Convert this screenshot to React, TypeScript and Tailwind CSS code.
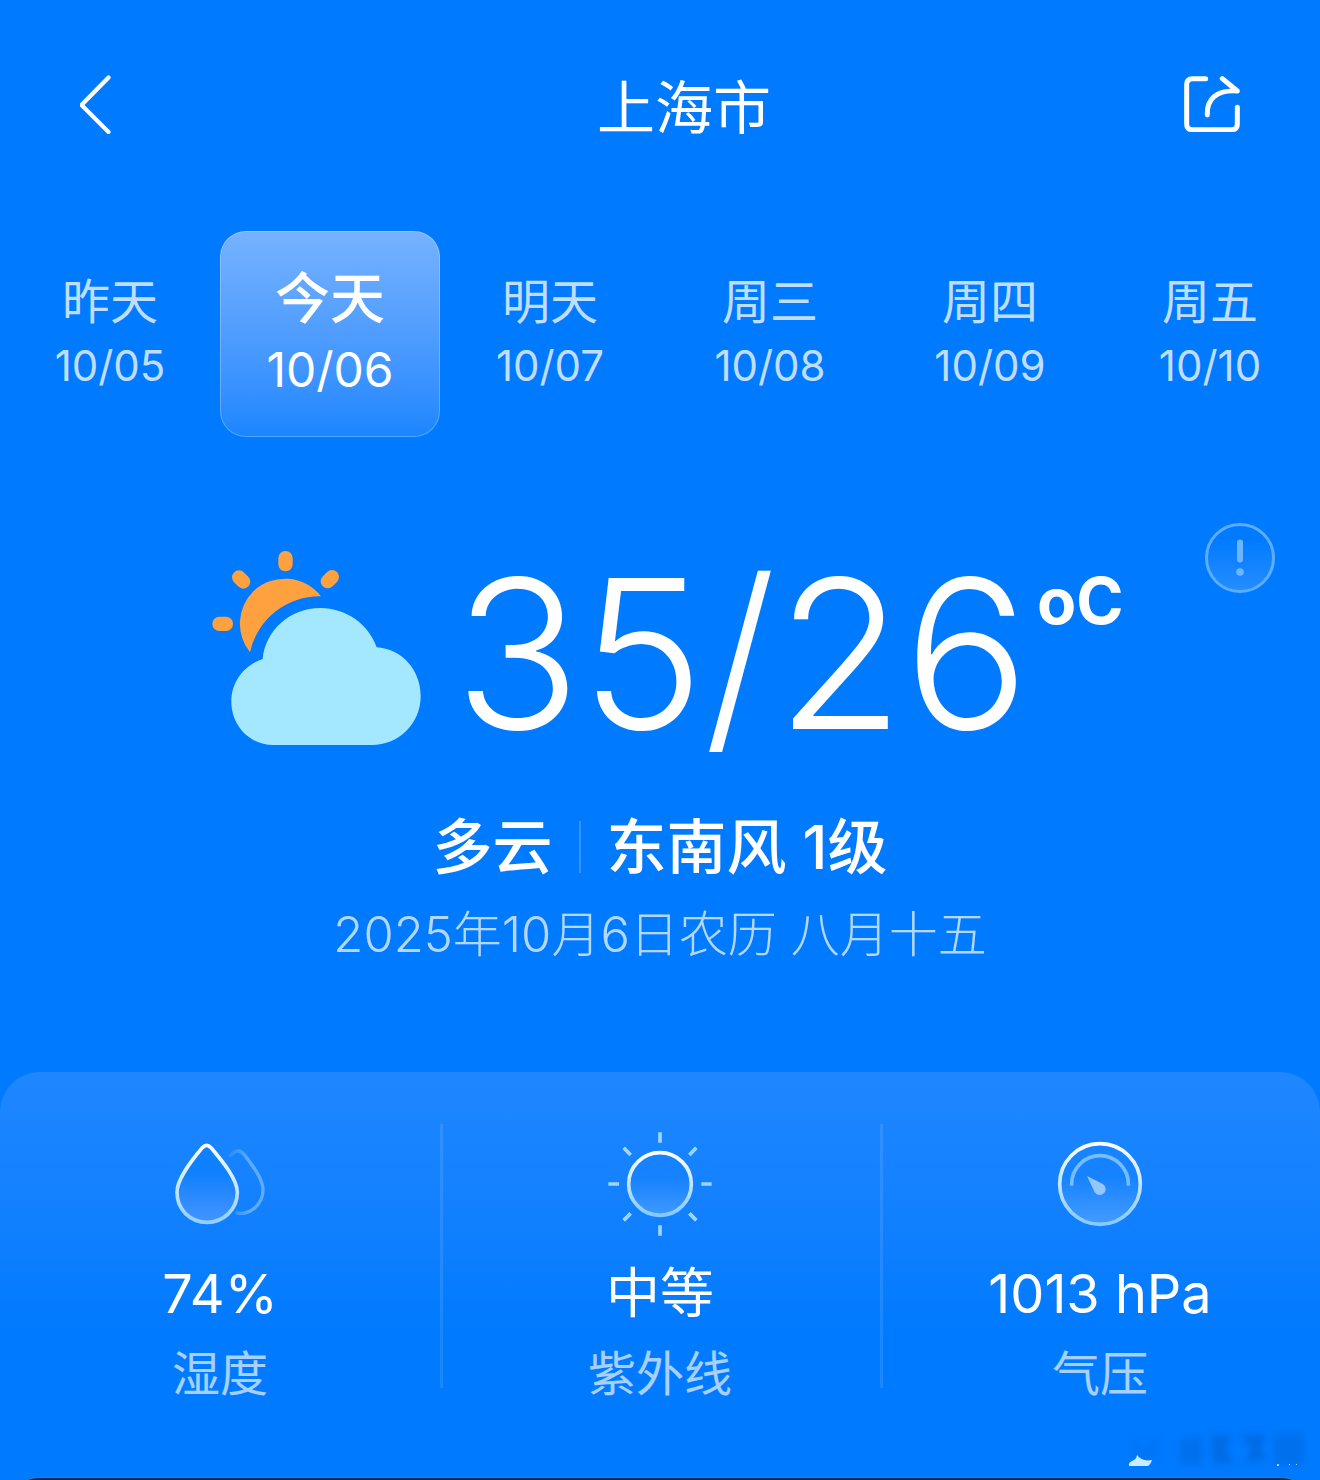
import type { ReactNode } from "react";
import { clsx } from "clsx";

interface Day {
  label: string;
  date: string;
  active?: boolean;
}

interface Metric {
  label: string;
  value: string;
  icon: ReactNode;
}

const days: Day[] = [
  { label: "昨天", date: "10/05" },
  { label: "今天", date: "10/06", active: true },
  { label: "明天", date: "10/07" },
  { label: "周三", date: "10/08" },
  { label: "周四", date: "10/09" },
  { label: "周五", date: "10/10" },
];

const metrics: Metric[] = [
  { label: "湿度", value: "74%", icon: <HumidityIcon /> },
  { label: "紫外线", value: "中等", icon: <UvIcon /> },
  { label: "气压", value: "1013 hPa", icon: <PressureIcon /> },
];

export default function App() {
  return (
    <div
      lang="zh-CN"
      className="flex min-h-screen flex-col bg-[#007aff] font-['Inter','Noto_Sans_CJK_SC',sans-serif] text-white"
    >
      {/* Header */}
      <header className="flex items-center justify-between px-20 pt-15">
        <button type="button" aria-label="返回" className="h-20 w-26">
          <BackIcon />
        </button>
        <h1 className="pt-2 text-[58px] leading-20">上海市</h1>
        <button type="button" aria-label="分享" className="flex h-20 items-center">
          <ShareIcon />
        </button>
      </header>

      {/* Day tabs */}
      <nav className="mt-[83px] grid grid-cols-6">
        {days.map((day) => (
          <DayTab key={day.date} {...day} />
        ))}
      </nav>

      {/* Current weather */}
      <main className="flex flex-col items-center pt-[86px]">
        <div className="grid w-full grid-cols-[1fr_auto_1fr] items-start">
          <div className="col-start-2 flex items-start pt-[26px] pl-4">
            <PartlyCloudyIcon />
            <p className="ml-8 flex items-start">
              <span className="text-[208px] leading-[208px] font-light">35/26</span>
              <span className="mt-4 ml-2 text-[64px] leading-[72px] font-bold">oC</span>
            </p>
          </div>
          <button type="button" aria-label="天气提示" className="mr-[45px] justify-self-end">
            <AlertIcon />
          </button>
        </div>
        <div className="mt-[50px] flex items-center text-[60px] leading-20">
          <span className="font-medium">多云</span>
          <span aria-hidden className="mx-[26px] h-13 w-0.5 bg-white/20" />
          <span className="font-medium">东南风 1级</span>
        </div>
        <p className="mt-4 text-[49px] leading-16 font-light text-white/70">
          2025年10月6日农历 八月十五
        </p>
      </main>

      {/* Metrics panel */}
      <section className="relative mt-[105px] flex-1 rounded-t-[40px] bg-linear-to-b from-[#1f87ff] to-[#007aff] to-65% pt-13">
        <dl className="grid grid-cols-3">
          {metrics.map((metric) => (
            <div
              key={metric.label}
              className="flex h-66 flex-col items-center border-l-3 border-white/10 pr-[3px] first:border-l-0 first:pr-0"
            >
              <div className="mt-1 h-28">{metric.icon}</div>
              <dt className="order-last mt-4 text-[48px] leading-16 text-white/65">
                {metric.label}
              </dt>
              <dd className="mt-[22px] text-[54px] leading-16">{metric.value}</dd>
            </div>
          ))}
        </dl>
        <CornerMark />
      </section>

      {/* Top edge of the next card */}
      <div aria-hidden className="h-[3px] overflow-hidden">
        <div className="h-20 rounded-t-[40px] border-t border-[#3b78b8] bg-[#0c2d57]" />
      </div>
    </div>
  );
}

function DayTab({ label, date, active }: Day) {
  return (
    <button
      type="button"
      aria-current={active ? "date" : undefined}
      className={clsx(
        "flex h-[206px] flex-col items-center rounded-[26px] border",
        active
          ? "border-white/25 bg-linear-to-b from-[#76b2ff] to-[#1a86ff] bg-origin-border pt-[30px]"
          : "border-transparent pt-[38px] text-white/75",
      )}
    >
      <span className={active ? "text-[55px] leading-18 font-medium" : "text-[48px] leading-16"}>
        {label}
      </span>
      <span className={active ? "text-[48px] leading-18" : "text-[42px] leading-16"}>{date}</span>
    </button>
  );
}

/* ─────────────────────────── Icons ─────────────────────────── */

function BackIcon() {
  return (
    <svg width="32" height="60" viewBox="0 0 32 60" fill="none" aria-hidden>
      <path
        d="M28.500 3.500 1.500 31 28.500 58"
        stroke="white"
        strokeWidth="4.200"
        strokeLinecap="round"
        strokeLinejoin="round"
      />
    </svg>
  );
}

function ShareIcon() {
  return (
    <svg width="56" height="56" viewBox="192 80 168 168" fill="none" aria-hidden>
      <g stroke="white" strokeWidth="15" strokeLinecap="round" strokeLinejoin="round">
        <path d="M257 88H217Q200 88 200 106V223Q200 241 217 241H335Q352 241 352 223V174" />
        <path d="M262 197C260 150 288 121 352 125L307 88" />
      </g>
    </svg>
  );
}

function PartlyCloudyIcon() {
  return (
    <svg width="210" height="198" viewBox="66 60 630 594" fill="none" aria-hidden>
      <g fill="#ffa13f">
        <path d="M180 370A137 137 0 0 1 190 187A137 137 0 0 1 393 202A213 213 0 0 0 180 370Z" />
        <rect x="265" y="66" width="43" height="61" rx="21" />
        <rect x="67" y="263" width="62" height="43" rx="21" />
      </g>
      <path
        d="M147 145 160 158M413 157 426 144"
        stroke="#ffa13f"
        strokeWidth="42"
        strokeLinecap="round"
      />
      <path
        d="M250 648C180 648 124 590 124 518C124 458 163 408 218 390C226 304 300 237 391 237C469 237 536 286 560 355C634 359 692 422 692 501C692 583 627 648 545 648Z"
        fill="#a4e8ff"
      />
    </svg>
  );
}

function AlertIcon() {
  return (
    <svg width="70" height="70" viewBox="0 0 70 70" fill="none" aria-hidden>
      <defs>
        <linearGradient id="alert-fill" x1="0" y1="0" x2="0" y2="1">
          <stop offset="0.2" stopColor="white" stopOpacity="0" />
          <stop offset="1" stopColor="white" stopOpacity="0.15" />
        </linearGradient>
      </defs>
      <circle cx="35" cy="35" r="33.500" fill="url(#alert-fill)" stroke="#5cadff" strokeWidth="3" />
      <path d="M35 19.500V36.500" stroke="#6bb6ff" strokeWidth="6" strokeLinecap="round" />
      <circle cx="35" cy="49" r="3.800" fill="#6bb6ff" />
    </svg>
  );
}

function HumidityIcon() {
  return (
    <svg width="112" height="112" viewBox="72 54 336 336" fill="none" aria-hidden>
      <defs>
        <linearGradient id="drop-fill" x1="0" y1="0" x2="0" y2="1">
          <stop offset="0.35" stopColor="#0f80ff" />
          <stop offset="1" stopColor="#4694ff" />
        </linearGradient>
        <linearGradient id="drop-line" x1="0" y1="0" x2="0" y2="1">
          <stop offset="0" stopColor="white" />
          <stop offset="1" stopColor="#92d1ff" />
        </linearGradient>
        <linearGradient id="drop-back" x1="0" y1="0" x2="1" y2="0">
          <stop offset="0" stopColor="#5cadff" stopOpacity="0.3" />
          <stop offset="0.6" stopColor="#5cadff" />
        </linearGradient>
      </defs>
      <path
        d="M271 137Q294 111 312 133C336 164 369 206 369 240C369 281 332 316 291 309"
        stroke="url(#drop-back)"
        strokeWidth="10"
        strokeLinecap="round"
      />
      <path
        d="M187 113Q200 99 213 113C244 150 292 206 292 247C292 299 250 337 201 337C151 337 111 299 111 247C111 206 156 150 187 113Z"
        fill="url(#drop-fill)"
        stroke="url(#drop-line)"
        strokeWidth="11"
      />
    </svg>
  );
}

function UvIcon() {
  return (
    <svg width="112" height="112" viewBox="72 54 336 336" fill="none" aria-hidden>
      <defs>
        <linearGradient id="uv-fill" x1="0" y1="0" x2="0" y2="1">
          <stop offset="0.4" stopColor="white" stopOpacity="0" />
          <stop offset="1" stopColor="white" stopOpacity="0.2" />
        </linearGradient>
        <linearGradient id="uv-line" x1="0" y1="0" x2="0" y2="1">
          <stop offset="0" stopColor="white" />
          <stop offset="1" stopColor="#86caff" />
        </linearGradient>
      </defs>
      <circle cx="240" cy="222" r="94" fill="url(#uv-fill)" stroke="url(#uv-line)" strokeWidth="11" />
      <path
        d="M240 67V98M240 346V377M85 222H117M364 222H395M131 113 152 135M349 113 328 135M131 331 152 310M349 331 328 310"
        stroke="#9bd6ff"
        strokeWidth="11"
      />
    </svg>
  );
}

function PressureIcon() {
  return (
    <svg width="112" height="112" viewBox="72 54 336 336" fill="none" aria-hidden>
      <defs>
        <linearGradient id="gauge-fill" x1="0" y1="0" x2="0" y2="1">
          <stop offset="0.4" stopColor="white" stopOpacity="0" />
          <stop offset="1" stopColor="white" stopOpacity="0.22" />
        </linearGradient>
        <linearGradient id="gauge-line" x1="0" y1="0" x2="0" y2="1">
          <stop offset="0" stopColor="white" />
          <stop offset="1" stopColor="#86caff" />
        </linearGradient>
      </defs>
      <circle cx="240" cy="222" r="121" fill="url(#gauge-fill)" stroke="url(#gauge-line)" strokeWidth="11" />
      <path d="M155 227V222A85 85 0 0 1 325 222V227" stroke="#74beff" strokeWidth="11" />
      <path d="M201 198 247 221A18 18 0 1 1 224 247Z" fill="#94c6ff" />
    </svg>
  );
}

/* Faded stamp over the bottom right corner */
function CornerMark() {
  return (
    <svg
      width="188"
      height="48"
      viewBox="0 0 188 48"
      fill="none"
      aria-hidden
      className="pointer-events-none absolute right-3 bottom-0.5"
    >
      <defs>
        <filter id="mark-blur" x="-10%" y="-30%" width="120%" height="160%">
          <feGaussianBlur stdDeviation="3.500" />
        </filter>
      </defs>
      <g filter="url(#mark-blur)" fill="#0066dc">
        <path d="M12 8 24 24 38 8V32H12Z" opacity="0.25" />
        <path d="M60 10H82V38H60Z" opacity="0.5" />
        <path d="M92 8H112L104 22 114 36H94Z" opacity="0.8" />
        <path d="M120 8H146L140 20 146 32 126 36 132 22Z" opacity="0.8" />
        <path d="M154 6H184V38H154Z" opacity="0.5" />
      </g>
      <path d="M9 39Q8 35 14 33Q17 31 17 28Q22 35 32 33Q30 39 27 39Z" fill="#c9ecff" />
      <path d="M157 37h2v2h-2zM169 37h1v1h-1zM176 37h1v1h-1z" fill="#a8d8ff" />
    </svg>
  );
}
